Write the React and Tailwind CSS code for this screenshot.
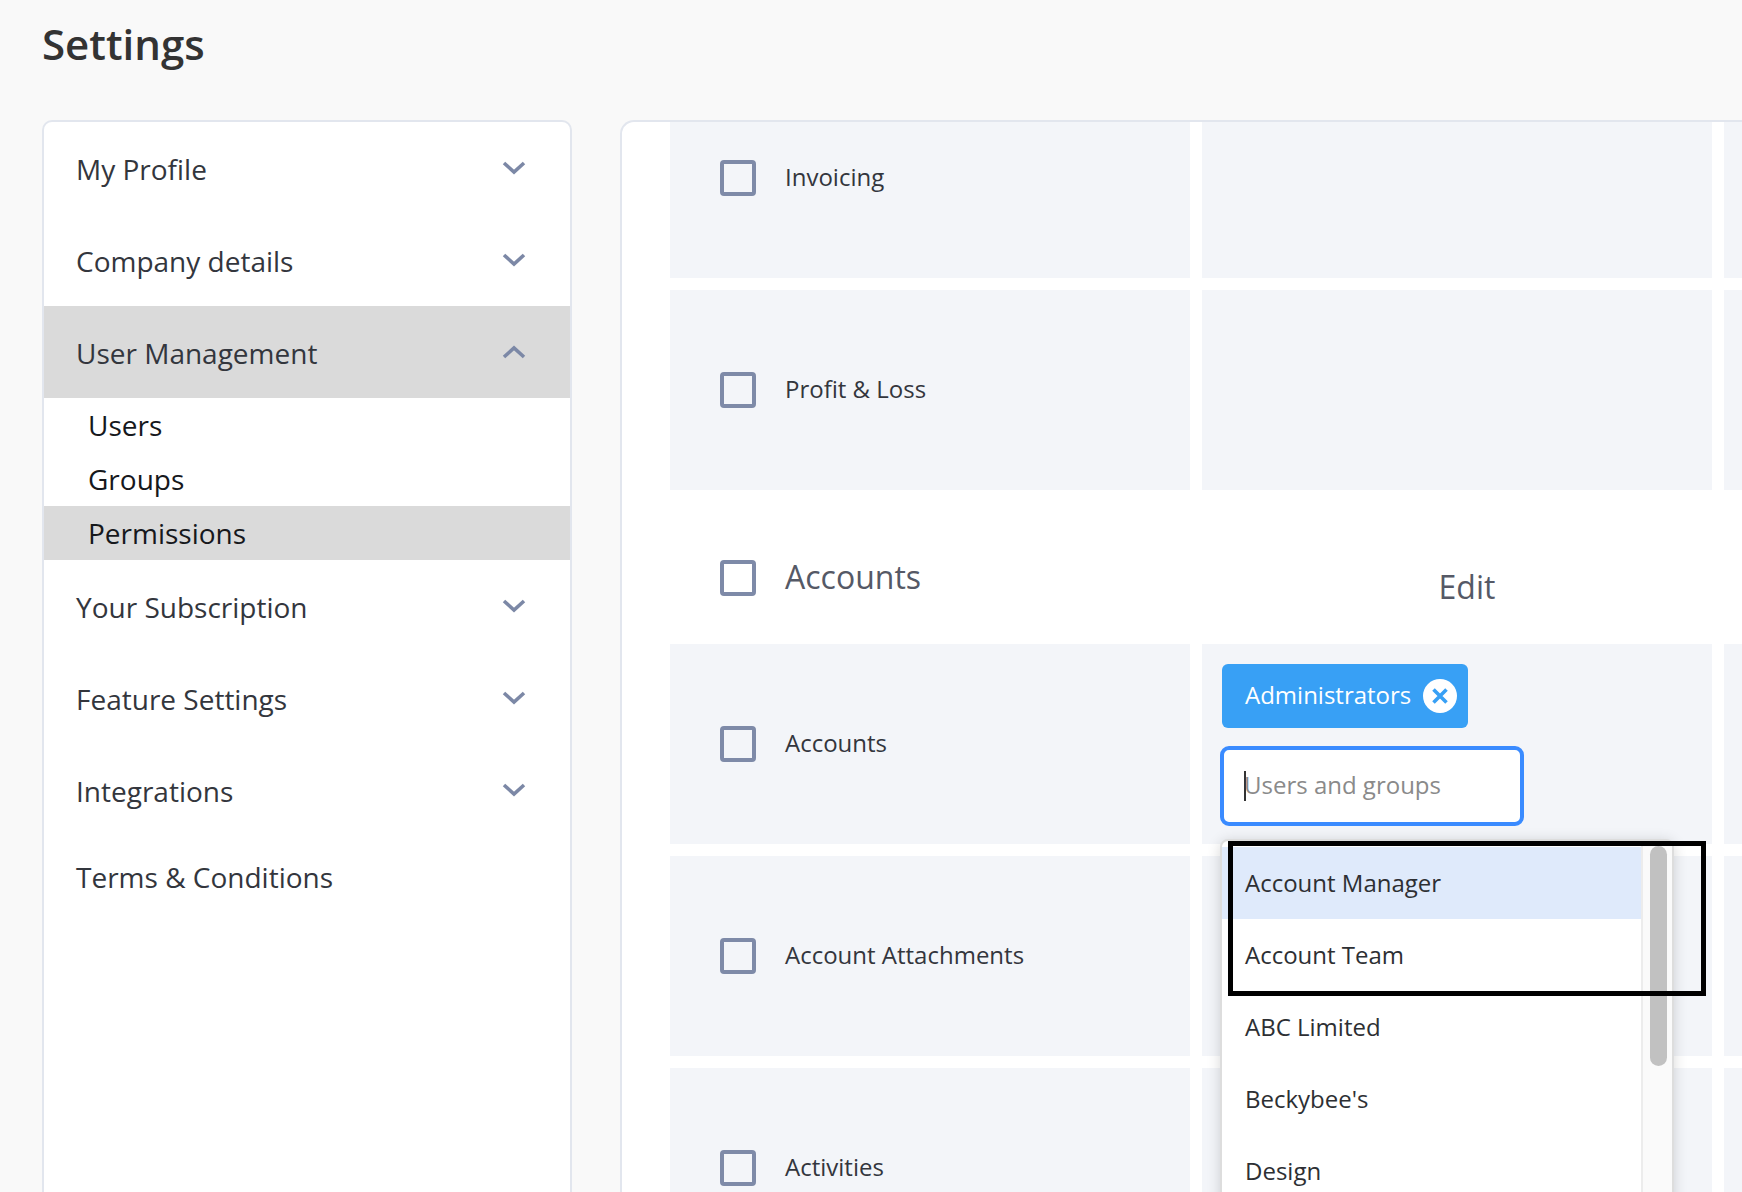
import React from 'react'

const fontStack = { fontFamily: '"Open Sans", sans-serif' }

function Chevron({ up }) {
  return (
    <svg width="24" height="14" viewBox="0 0 24 14" fill="none" className="shrink-0">
      <path d={up ? 'M2 12 L12 3 L22 12' : 'M2 2 L12 11 L22 2'} stroke="#7c88a6" strokeWidth="3.6" />
    </svg>
  )
}

function NavItem({ label, open, active }) {
  return (
    <div className={`flex h-[92px] items-center justify-between pl-[32px] pr-[44px] ${active ? 'bg-[#dadada]' : ''}`}>
      <span className="mt-[2px] text-[28px] leading-none text-[#33363d]">{label}</span>
      <div>
        <Chevron up={open} />
      </div>
    </div>
  )
}

function SubItem({ label, active }) {
  return (
    <div className={`flex h-[54px] items-center pl-[44px] text-[28px] leading-none text-[#16181c] ${active ? 'bg-[#dadada]' : ''}`}>
      {label}
    </div>
  )
}

function Checkbox() {
  return <div className="h-[36px] w-[36px] shrink-0 rounded-[4px] border-4 border-[#7e8aa8]" />
}

function Row({ label, children, className = '' }) {
  return (
    <div className={`grid h-[200px] grid-cols-[520px_510px_1fr] gap-x-[12px] ${className}`}>
      <div className="flex items-center gap-[29px] bg-[#f3f5f9] pl-[50px]">
        <Checkbox />
        <span className="-mt-[3px] text-[24px] text-[#33363d]">{label}</span>
      </div>
      <div className="relative bg-[#f3f5f9]">{children}</div>
      <div className="bg-[#f3f5f9]" />
    </div>
  )
}

function AdminCell() {
  const options = ['Account Manager', 'Account Team', 'ABC Limited', "Beckybee's", 'Design']
  return (
    <div className="relative z-10 h-full pl-[20px] pt-[20px]">
      <div className="flex h-[64px] w-[246px] items-center rounded-[6px] bg-[#38a0f5] pl-[23px]">
        <span className="-mt-[3px] text-[24px] text-white">Administrators</span>
        <div className="ml-[12px] flex h-[34px] w-[34px] items-center justify-center rounded-full bg-white">
          <svg width="20" height="20" viewBox="0 0 20 20" fill="none">
            <path d="M3.5 3.5 L16.5 16.5 M16.5 3.5 L3.5 16.5" stroke="#38a0f5" strokeWidth="3.6" />
          </svg>
        </div>
      </div>
      <div className="-ml-[2px] mt-[18px] flex h-[80px] w-[304px] items-center rounded-[9px] border-4 border-[#3a8bff] bg-white pl-[20px]">
        <div className="h-[30px] w-[2px] bg-[#333]" />
        <span className="-mt-[2px] -ml-[2px] text-[24px] text-[#8a8a8a]">Users and groups</span>
      </div>

      <div className="absolute left-[18px] top-[195px] flex h-[400px] w-[454px] rounded-[8px] border-2 border-[#dddddd] bg-white pt-[6px] shadow-[0_2px_14px_rgba(0,0,0,0.16)]">
        <div className="flex-1">
          {options.map((o, i) => (
            <div
              key={o}
              className={`flex h-[72px] items-center pl-[23px] text-[24px] text-[#2d2f33] ${i === 0 ? 'bg-[#dfeafb]' : ''}`}
            >
              {o}
            </div>
          ))}
        </div>
        <div className="-mt-[6px] w-[31px] border-l-2 border-[#ececec] bg-[#fafafa] pl-[7px] pt-[5px]">
          <div className="h-[220px] w-[17px] rounded-full bg-[#c1c1c1]" />
        </div>
      </div>

      {/* annotation box drawn on top of the screenshot */}
      <div className="absolute left-[26px] top-[197px] h-[155px] w-[478px] border-[5px] border-black" />
    </div>
  )
}

export default function App() {
  return (
    <div className="h-[1192px] w-[1742px] overflow-hidden bg-[#f9f9f9]" style={fontStack}>
      <div className="flex h-[120px] items-start pl-[42px] pt-[16px]">
        <h1 className="text-[42px] font-semibold leading-[56px] text-[#333333]">Settings</h1>
      </div>
      <div className="flex items-start pl-[42px]">
        <div className="h-[1100px] w-[530px] shrink-0 rounded-t-[10px] border-2 border-[#e2e6ee] bg-white">
          <NavItem label="My Profile" />
          <NavItem label="Company details" />
          <NavItem label="User Management" open active />
          <SubItem label="Users" />
          <SubItem label="Groups" />
          <SubItem label="Permissions" active />
          <NavItem label="Your Subscription" />
          <NavItem label="Feature Settings" />
          <NavItem label="Integrations" />
          <div className="-mt-[1px] flex h-[84px] items-center pl-[32px] text-[28px] leading-none text-[#33363d]">
            Terms &amp; Conditions
          </div>
        </div>
        <div className="ml-[48px] h-[1100px] flex-1 overflow-hidden rounded-tl-[14px] border-l-2 border-t-2 border-[#e2e6ee] bg-white pl-[48px]">
          {/* list is scrolled, first row is cut by the panel top */}
          <Row label="Invoicing" className="-mt-[44px]" />
          <div className="h-[12px]" />
          <Row label="Profit & Loss" />
          <div className="grid h-[154px] grid-cols-[520px_510px_1fr] gap-x-[12px]">
            <div className="flex items-center gap-[29px] pl-[50px] pt-[22px]">
              <Checkbox />
              <span className="-mt-[2px] text-[32px] text-[#555966]">Accounts</span>
            </div>
            <div className="flex items-center justify-center pl-[20px] pt-[40px] text-[32px] text-[#555966]">Edit</div>
          </div>
          <Row label="Accounts">
            <AdminCell />
          </Row>
          <div className="h-[12px]" />
          <Row label="Account Attachments" />
          <div className="h-[12px]" />
          <Row label="Activities" />
        </div>
      </div>
    </div>
  )
}
